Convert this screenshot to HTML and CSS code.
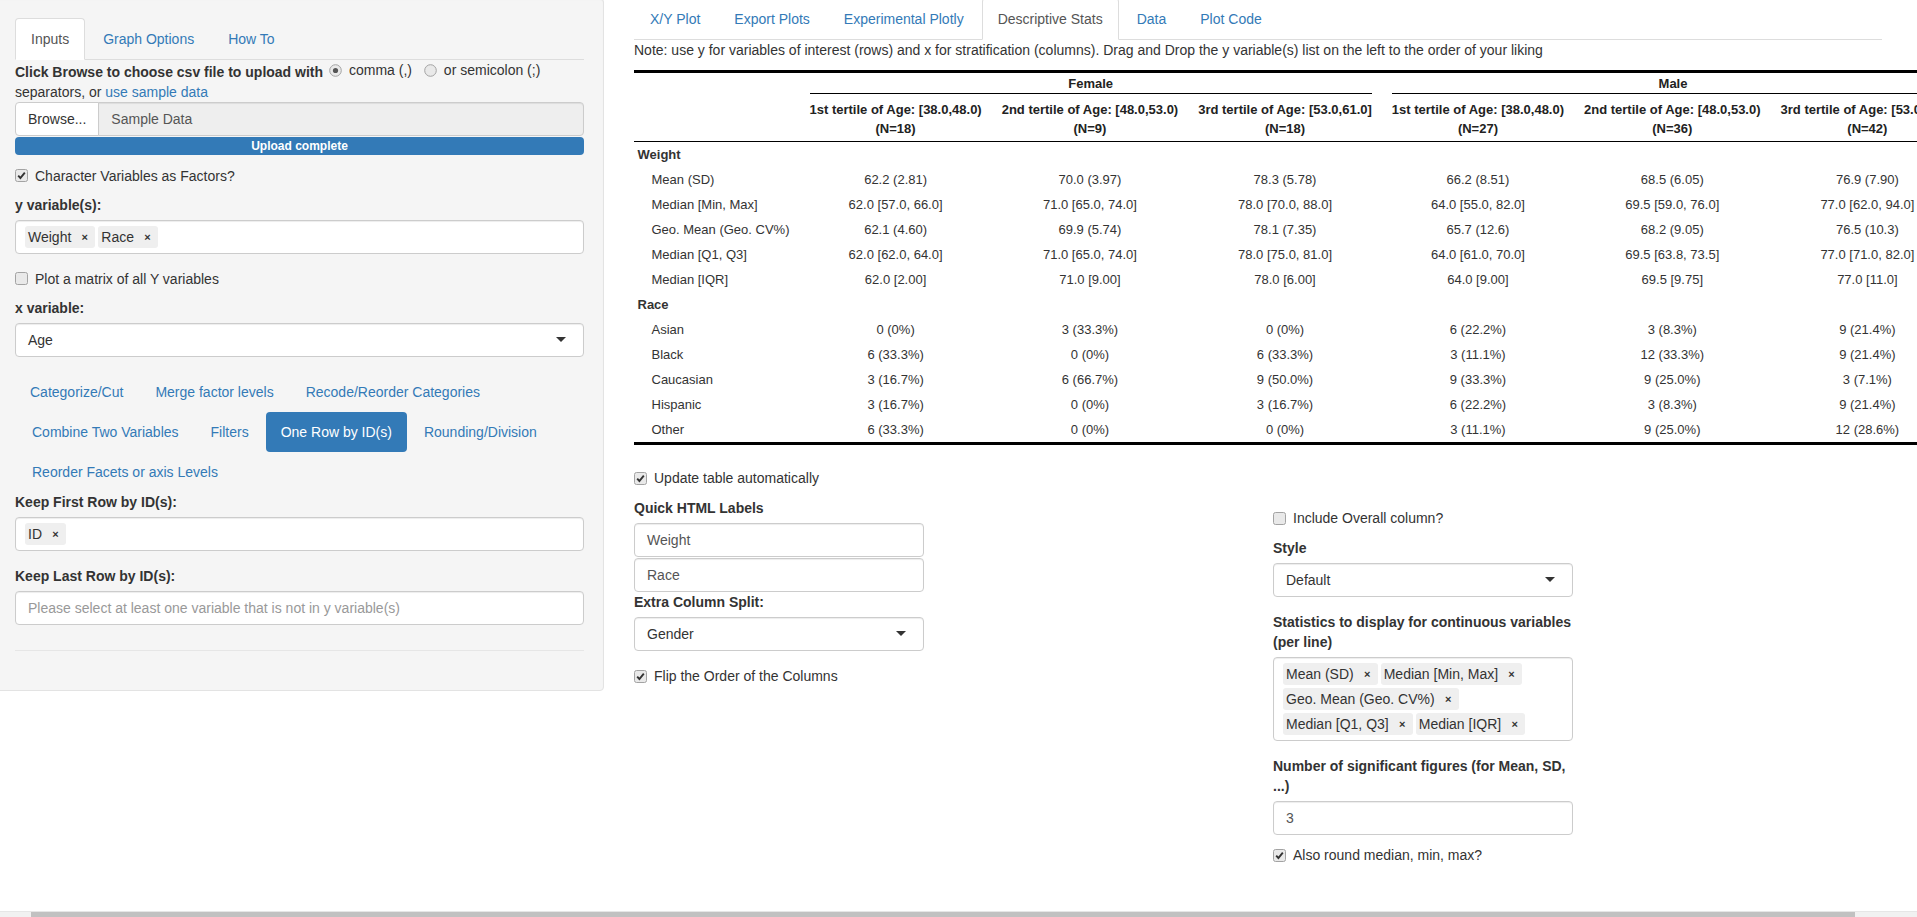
FILE: index.html
```html
<!DOCTYPE html>
<html>
<head>
<meta charset="utf-8">
<title>Descriptive Stats</title>
<link rel="stylesheet" href="styles.css">
</head>
<body>
<div class="page">
  <div class="col-side">
    <div class="well">
      <ul class="nav-tabs">
        <li class="active"><a>Inputs</a></li>
        <li><a>Graph Options</a></li>
        <li><a>How To</a></li>
      </ul>
      <div class="tab-content">
        <div class="form-group file-group">
          <div class="file-label"><b>Click Browse to choose csv file to upload with</b> <span class="radio-inline"><svg class="rb" width="13" height="13" viewBox="0 0 13 13"><circle cx="6.5" cy="6.5" r="5.8" fill="#e9e9e9" stroke="#a3a3a3"/><circle cx="6.5" cy="6.5" r="2.6" fill="#555"/></svg>comma (,)</span> <span class="radio-inline"><svg class="rb" width="13" height="13" viewBox="0 0 13 13"><circle cx="6.5" cy="6.5" r="5.8" fill="#e9e9e9" stroke="#a3a3a3"/></svg>or semicolon (;)</span> separators, or <a>use sample data</a></div>
          <div class="input-group">
            <span class="btn-file">Browse...</span>
            <span class="file-name">Sample Data</span>
          </div>
          <div class="progress"><div class="progress-bar">Upload complete</div></div>
        </div>

        <div class="checkbox side-cb"><svg class="cb" width="13" height="13" viewBox="0 0 13 13"><rect x="0.5" y="0.5" width="12" height="12" rx="2" fill="#e9e9e9" stroke="#a3a3a3"/><path d="M3.2 6.6 L5.4 9 L9.8 3.6" fill="none" stroke="#333" stroke-width="1.9"/></svg><span>Character Variables as Factors?</span></div>

        <div class="form-group">
          <div class="ctl-label">y variable(s):</div>
          <div class="selectize">
            <span class="item">Weight<span class="rm">×</span></span>
            <span class="item">Race<span class="rm">×</span></span>
          </div>
        </div>

        <div class="checkbox side-cb"><svg class="cb" width="13" height="13" viewBox="0 0 13 13"><rect x="0.5" y="0.5" width="12" height="12" rx="2" fill="#e9e9e9" stroke="#a3a3a3"/></svg><span>Plot a matrix of all Y variables</span></div>

        <div class="form-group">
          <div class="ctl-label">x variable:</div>
          <div class="select">Age</div>
        </div>

        <ul class="nav-pills">
          <li><a>Categorize/Cut</a></li>
          <li><a>Merge factor levels</a></li>
          <li><a>Recode/Reorder Categories</a></li>
          <li><a>Combine Two Variables</a></li>
          <li><a>Filters</a></li>
          <li class="active"><a>One Row by ID(s)</a></li>
          <li><a>Rounding/Division</a></li>
          <li><a>Reorder Facets or axis Levels</a></li>
        </ul>

        <div class="form-group">
          <div class="ctl-label">Keep First Row by ID(s):</div>
          <div class="selectize">
            <span class="item">ID<span class="rm">×</span></span>
          </div>
        </div>

        <div class="form-group">
          <div class="ctl-label">Keep Last Row by ID(s):</div>
          <div class="selectize placeholder">Please select at least one variable that is not in y variable(s)</div>
        </div>
        <hr class="side-hr">
      </div>
    </div>
  </div>

  <div class="col-main">
    <ul class="nav-tabs">
      <li><a>X/Y Plot</a></li>
      <li><a>Export Plots</a></li>
      <li><a>Experimental Plotly</a></li>
      <li class="active"><a>Descriptive Stats</a></li>
      <li><a>Data</a></li>
      <li><a>Plot Code</a></li>
    </ul>
    <p class="note">Note: use y for variables of interest (rows) and x for stratification (columns). Drag and Drop the y variable(s) list on the left to the order of your liking</p>

    <div class="table-wrap">
      <table class="t1">
        <thead>
          <tr>
            <th class="rl"></th>
            <th colspan="3" class="grouplabel"><div>Female</div></th>
            <th colspan="3" class="grouplabel"><div>Male</div></th>
          </tr>
          <tr>
            <th class="rl"></th>
            <th>1st tertile of Age: [38.0,48.0)<br>(N=18)</th>
            <th>2nd tertile of Age: [48.0,53.0)<br>(N=9)</th>
            <th>3rd tertile of Age: [53.0,61.0]<br>(N=18)</th>
            <th>1st tertile of Age: [38.0,48.0)<br>(N=27)</th>
            <th>2nd tertile of Age: [48.0,53.0)<br>(N=36)</th>
            <th>3rd tertile of Age: [53.0,61.0]<br>(N=42)</th>
          </tr>
        </thead>
        <tbody>
          <tr><td class="rl first">Weight</td><td></td><td></td><td></td><td></td><td></td><td></td></tr>
          <tr><td class="rl">Mean (SD)</td><td>62.2 (2.81)</td><td>70.0 (3.97)</td><td>78.3 (5.78)</td><td>66.2 (8.51)</td><td>68.5 (6.05)</td><td>76.9 (7.90)</td></tr>
          <tr><td class="rl">Median [Min, Max]</td><td>62.0 [57.0, 66.0]</td><td>71.0 [65.0, 74.0]</td><td>78.0 [70.0, 88.0]</td><td>64.0 [55.0, 82.0]</td><td>69.5 [59.0, 76.0]</td><td>77.0 [62.0, 94.0]</td></tr>
          <tr><td class="rl">Geo. Mean (Geo. CV%)</td><td>62.1 (4.60)</td><td>69.9 (5.74)</td><td>78.1 (7.35)</td><td>65.7 (12.6)</td><td>68.2 (9.05)</td><td>76.5 (10.3)</td></tr>
          <tr><td class="rl">Median [Q1, Q3]</td><td>62.0 [62.0, 64.0]</td><td>71.0 [65.0, 74.0]</td><td>78.0 [75.0, 81.0]</td><td>64.0 [61.0, 70.0]</td><td>69.5 [63.8, 73.5]</td><td>77.0 [71.0, 82.0]</td></tr>
          <tr><td class="rl">Median [IQR]</td><td>62.0 [2.00]</td><td>71.0 [9.00]</td><td>78.0 [6.00]</td><td>64.0 [9.00]</td><td>69.5 [9.75]</td><td>77.0 [11.0]</td></tr>
          <tr><td class="rl first">Race</td><td></td><td></td><td></td><td></td><td></td><td></td></tr>
          <tr><td class="rl">Asian</td><td>0 (0%)</td><td>3 (33.3%)</td><td>0 (0%)</td><td>6 (22.2%)</td><td>3 (8.3%)</td><td>9 (21.4%)</td></tr>
          <tr><td class="rl">Black</td><td>6 (33.3%)</td><td>0 (0%)</td><td>6 (33.3%)</td><td>3 (11.1%)</td><td>12 (33.3%)</td><td>9 (21.4%)</td></tr>
          <tr><td class="rl">Caucasian</td><td>3 (16.7%)</td><td>6 (66.7%)</td><td>9 (50.0%)</td><td>9 (33.3%)</td><td>9 (25.0%)</td><td>3 (7.1%)</td></tr>
          <tr><td class="rl">Hispanic</td><td>3 (16.7%)</td><td>0 (0%)</td><td>3 (16.7%)</td><td>6 (22.2%)</td><td>3 (8.3%)</td><td>9 (21.4%)</td></tr>
          <tr><td class="rl">Other</td><td>6 (33.3%)</td><td>0 (0%)</td><td>0 (0%)</td><td>3 (11.1%)</td><td>9 (25.0%)</td><td>12 (28.6%)</td></tr>
        </tbody>
      </table>
    </div>

    <div class="checkbox"><svg class="cb" width="13" height="13" viewBox="0 0 13 13"><rect x="0.5" y="0.5" width="12" height="12" rx="2" fill="#e9e9e9" stroke="#a3a3a3"/><path d="M3.2 6.6 L5.4 9 L9.8 3.6" fill="none" stroke="#333" stroke-width="1.9"/></svg><span>Update table automatically</span></div>

    <div class="opts-row">
      <div class="opts-col">
        <div class="ctl-label">Quick HTML Labels</div>
        <div class="text-input stacked">Weight</div>
        <div class="text-input">Race</div>
        <div class="form-group">
          <div class="ctl-label">Extra Column Split:</div>
          <div class="select">Gender</div>
        </div>
        <div class="checkbox"><svg class="cb" width="13" height="13" viewBox="0 0 13 13"><rect x="0.5" y="0.5" width="12" height="12" rx="2" fill="#e9e9e9" stroke="#a3a3a3"/><path d="M3.2 6.6 L5.4 9 L9.8 3.6" fill="none" stroke="#333" stroke-width="1.9"/></svg><span>Flip the Order of the Columns</span></div>
      </div>
      <div class="opts-col"></div>
      <div class="opts-col wide">
        <div class="checkbox"><svg class="cb" width="13" height="13" viewBox="0 0 13 13"><rect x="0.5" y="0.5" width="12" height="12" rx="2" fill="#e9e9e9" stroke="#a3a3a3"/></svg><span>Include Overall column?</span></div>
        <div class="form-group w300">
          <div class="ctl-label">Style</div>
          <div class="select">Default</div>
        </div>
        <div class="form-group w300">
          <div class="ctl-label">Statistics to display for continuous variables (per line)</div>
          <div class="selectize">
            <span class="item">Mean (SD)<span class="rm">×</span></span>
            <span class="item">Median [Min, Max]<span class="rm">×</span></span>
            <span class="item">Geo. Mean (Geo. CV%)<span class="rm">×</span></span>
            <span class="item">Median [Q1, Q3]<span class="rm">×</span></span>
            <span class="item">Median [IQR]<span class="rm">×</span></span>
          </div>
        </div>
        <div class="form-group w300 tight">
          <div class="ctl-label">Number of significant figures (for Mean, SD, ...)</div>
          <div class="text-input">3</div>
        </div>
        <div class="checkbox"><svg class="cb" width="13" height="13" viewBox="0 0 13 13"><rect x="0.5" y="0.5" width="12" height="12" rx="2" fill="#e9e9e9" stroke="#a3a3a3"/><path d="M3.2 6.6 L5.4 9 L9.8 3.6" fill="none" stroke="#333" stroke-width="1.9"/></svg><span>Also round median, min, max?</span></div>
      </div>
    </div>
  </div>
</div>
<div class="hscroll"><div class="thumb"></div></div>
</body>
</html>
```

FILE: styles.css
```css
* { box-sizing: border-box; }
html, body { margin: 0; padding: 0; overflow: hidden; }
body {
  width: 1917px;
  height: 917px;
  font-family: "Liberation Sans", Arial, Helvetica, sans-serif;
  font-size: 14px;
  line-height: 20px;
  color: #333;
  background: #fff;
}
a { color: #337ab7; text-decoration: none; }

.page {
  display: flex;
  align-items: flex-start;
  margin: -2px 0 0 -20px;
}
.col-side { flex: 0 0 639px; padding: 0 15px; }
.col-main { flex: 0 0 1278px; padding: 0 15px; min-width: 0; }

.well {
  background: #f5f5f5;
  border: 1px solid #e3e3e3;
  border-radius: 4px;
  padding: 19px;
  box-shadow: inset 0 1px 1px rgba(0,0,0,.05);
}

/* tabs */
.nav-tabs {
  display: flex;
  list-style: none;
  margin: 0;
  padding: 0;
  border-bottom: 1px solid #ddd;
}
.nav-tabs li { margin: 0 2px -1px 0; }
.nav-tabs a {
  display: block;
  padding: 10px 15px;
  line-height: 20px;
  border: 1px solid transparent;
  border-radius: 4px 4px 0 0;
}
.nav-tabs .active a {
  color: #555;
  background: #fff;
  border-color: #ddd #ddd transparent;
}

/* form */
.form-group { margin-bottom: 15px; }
.file-group { margin-bottom: 11px; }
.form-group.tight { margin-bottom: 10px; }
.ctl-label { font-weight: bold; margin-bottom: 5px; }
.file-label { margin-bottom: 0; }
.radio-inline { display: inline-flex; align-items: center; margin-left: 2px; margin-right: 6px; }
.rb { margin-right: 7px; }

.input-group { display: flex; height: 34px; }
.btn-file {
  display: flex;
  align-items: center;
  padding: 6px 12px;
  background: #fff;
  border: 1px solid #ccc;
  border-radius: 4px 0 0 4px;
  color: #333;
}
.file-name {
  flex: 1;
  display: flex;
  align-items: center;
  padding: 6px 12px;
  margin-left: -1px;
  background: #eee;
  border: 1px solid #ccc;
  border-radius: 0 4px 4px 0;
  color: #555;
  box-shadow: inset 0 1px 1px rgba(0,0,0,.075);
}
.progress {
  margin-top: 1px;
  height: 18px;
  border-radius: 4px;
  background: #f5f5f5;
  overflow: hidden;
}
.progress-bar {
  height: 100%;
  background: #337ab7;
  color: #fff;
  font-size: 12px;
  font-weight: bold;
  line-height: 18px;
  text-align: center;
}

.checkbox {
  display: flex;
  align-items: center;
  margin: 10px 0;
}
.checkbox.side-cb { margin-bottom: 9px; }
.cb { margin-right: 7px; flex: none; }

.selectize {
  display: flex;
  flex-wrap: wrap;
  align-items: flex-start;
  min-height: 34px;
  padding: 5px 9px 2px;
  background: #fff;
  border: 1px solid #ccc;
  border-radius: 4px;
  box-shadow: inset 0 1px 1px rgba(0,0,0,.075);
}
.selectize.placeholder { padding: 6px 12px; color: #999; }
.item {
  display: flex;
  align-items: center;
  padding: 1px 0 1px 3px;
  margin: 0 3px 3px 0;
  background: #efefef;
  border-radius: 3px;
  color: #333;
}
.rm {
  width: 24px;
  text-align: center;
  font-size: 11px;
  font-weight: bold;
  color: #333;
  padding-left: 3px;
}

.select {
  position: relative;
  height: 34px;
  padding: 6px 12px;
  background: #fff;
  border: 1px solid #ccc;
  border-radius: 4px;
  box-shadow: inset 0 1px 1px rgba(0,0,0,.075);
  color: #333;
}
.select::after {
  content: "";
  position: absolute;
  right: 17px;
  top: 50%;
  margin-top: -3px;
  border-style: solid;
  border-width: 5px 5px 0 5px;
  border-color: #333 transparent transparent transparent;
}

.text-input {
  height: 34px;
  padding: 6px 12px;
  background: #fff;
  border: 1px solid #ccc;
  border-radius: 4px;
  box-shadow: inset 0 1px 1px rgba(0,0,0,.075);
  color: #555;
}
.text-input.stacked { margin-bottom: 1px; }

/* pills */
.nav-pills {
  display: flex;
  flex-wrap: wrap;
  list-style: none;
  margin: 0;
  padding: 0;
}
.nav-pills li + li { margin-left: 2px; }
.nav-pills a {
  display: block;
  padding: 10px 15px;
  border-radius: 4px;
}
.nav-pills .active a { background: #337ab7; color: #fff; }

.side-hr {
  border: 0;
  border-top: 1px solid #e6e6e6;
  margin: 25px 0 20px;
}

/* main */
.note { margin: 0 0 10px; }

.table-wrap { margin-bottom: 23px; }
.t1 {
  border-collapse: collapse;
  border-spacing: 0;
  font-family: "Liberation Sans", Arial, Helvetica, sans-serif;
  font-size: 13px;
  line-height: 19px;
  white-space: nowrap;
}
.t1 th, .t1 td {
  border: 0;
  text-align: center;
  padding: 3px 10px;
}
.t1 th { font-weight: bold; color: #222; vertical-align: bottom; }
.t1 thead tr:first-child th { border-top: 3px solid #000; padding-top: 1px; padding-bottom: 3px; }
.t1 thead tr:last-child th { border-bottom: 1px solid #000; }
.t1 tbody tr:last-child td { border-bottom: 3px solid #000; }
.t1 .grouplabel div { border-bottom: 1px solid #000; }
.t1 .rl { text-align: left; padding-left: 17.5px; }
.t1 .rl.first { padding-left: 3.5px; font-weight: bold; }

.opts-row { display: flex; margin: 10px -15px 0; }
.opts-col { flex: 0 0 319.5px; padding: 0 15px; }
.opts-col.wide { flex: 1 1 auto; }
.w300 { width: 300px; }

.hscroll {
  position: fixed;
  left: 0;
  right: 0;
  bottom: 0;
  height: 6px;
  background: #f1f1f1;
  border-top: 1px solid #e6e6e6;
}
.hscroll .thumb {
  margin-left: 31px;
  width: 1824px;
  height: 5px;
  background: #c1c1c1;
}
```
